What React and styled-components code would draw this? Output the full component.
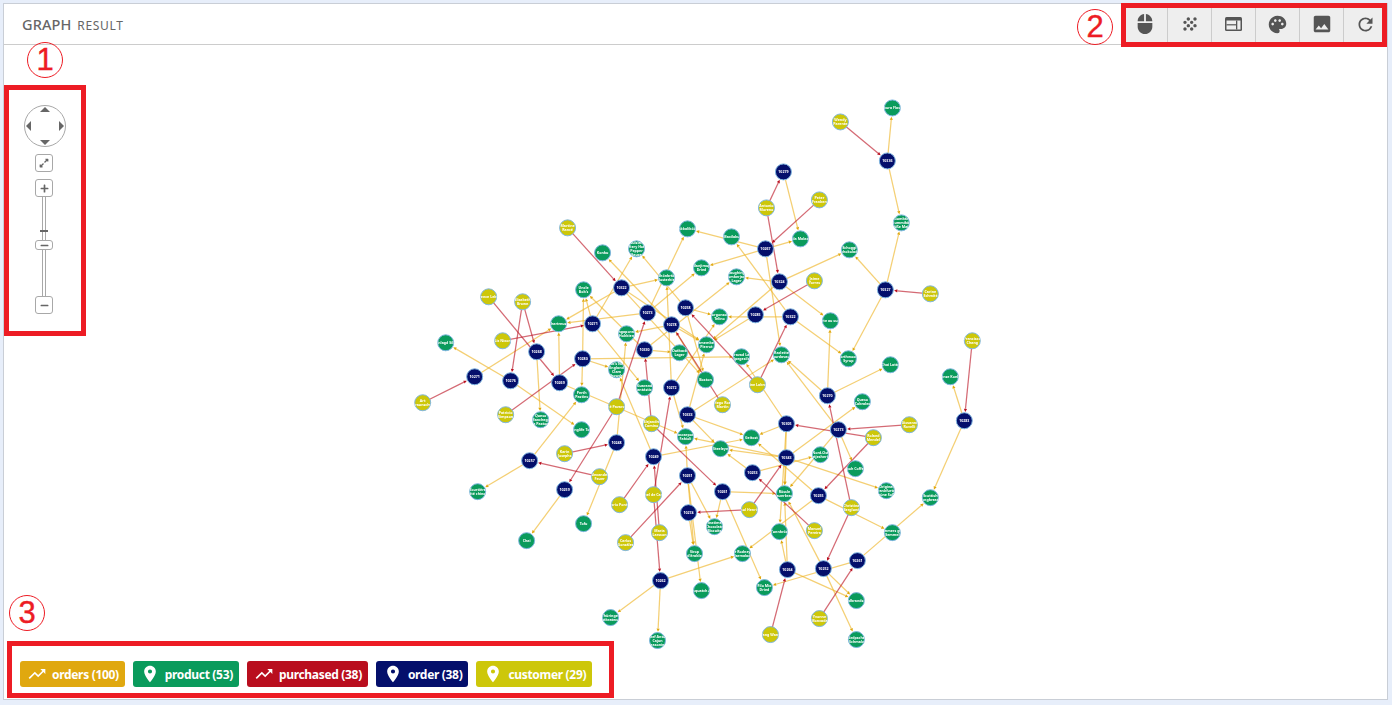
import React from "react";
import styled, { createGlobalStyle } from "styled-components";
import { MdMouse, MdGrain, MdPalette, MdImage, MdRefresh, MdTrendingUp, MdPlace } from "react-icons/md";
import { FaExpandAlt, FaPlus, FaMinus } from "react-icons/fa";

const Global = createGlobalStyle`
  html, body { margin: 0; padding: 0; background: #e7eefa; }
  body { font-family: "Noto Sans", "Liberation Sans", sans-serif; }
`;

const COLORS = {
  orders: "#e0a80f",
  product: "#0a9b5c",
  purchased: "#b90e1e",
  order: "#040f6b",
  customer: "#cdc70a",
};

const customers = [
  ["c1",568,228,"Martine\nRancé"],["c2",489,297,"Laurence Lebihan"],["c3",523,302,"Elizabeth\nBrown"],["c4",503,341,"Liz Nixon"],
  ["c5",423,403,"Art\nBraunschw"],["c6",506,415,"Patricio\nSimpson"],["c7",565,454,"Karin\nJosephs"],["c8",600,477,"Alexander\nFeuer"],
  ["c9",617,407,"José Pavarotti"],["c10",652,424,"Alejandra\nCamino"],["c11",620,505,"Mario Pontes"],["c12",654,495,"Isabel de Castro"],
  ["c13",660,533,"Maria\nLarsson"],["c14",626,543,"Carlos\nGonzález"],["c15",758,385,"Janine Labrune"],["c16",723,405,"Diego Roel\nMartín"],
  ["c17",750,510,"Paul Henriot"],["c18",815,531,"Manuel\nPereira"],["c19",852,508,"Christina\nBerglund"],["c20",874,438,"Roland\nMendel"],
  ["c21",910,425,"Giovanni\nRovelli"],["c22",820,619,"Yvonne\nMoncada"],["c23",771,635,"Yang Wang"],["c24",841,122,"Wendy\nParente"],
  ["c25",767,208,"Antonio\nMoreno"],["c26",820,200,"Peter\nFranken"],["c27",815,281,"Jaime\nYorres"],["c28",931,294,"Carine\nSchmitt"],
  ["c29",973,341,"Francisco\nChang"],
];

const products = [
  ["p1",893,108,"Ikura Flash"],["p2",902,223,"Gumbär\nGummibär\nSüße Maid"],["p3",850,250,"Schoggi\nSchokolade"],["p4",801,239,"Gula Malacca"],
  ["p5",732,237,"Maxilaku"],["p6",737,277,"Laughing\nLumberjack\nLager"],["p7",702,268,"Manjimup\nDried"],["p8",688,229,"Lakkalikööri"],
  ["p9",603,253,"Konbu"],["p10",637,249,"Louisiana\nFiery Hot\nPepper\nSauce"],["p11",667,278,"Rhönbräu\nKlosterbier"],["p12",584,290,"Uncle\nBob's"],
  ["p13",559,324,"Chartreuse"],["p14",446,343,"Inlagd Sill"],["p15",627,334,"Singaporean\nHokkien"],["p16",720,317,"Gorgonzola\nTelino"],
  ["p17",707,345,"Camembert\nPierrot"],["p18",680,353,"Outback\nLager"],["p19",742,357,"Gravad Lax\nSpegesild"],["p20",782,355,"Raclette\nCourdavault"],
  ["p21",831,321,"Tarte au sucre"],["p22",849,359,"Northwoods\nSyrup"],["p23",891,365,"Chai Latte"],["p24",951,377,"Zaanse Koeken"],
  ["p25",617,370,"Jack's New\nEngland\nClam\nChowder"],["p26",582,395,"Perth\nPasties"],["p27",541,420,"Queso\nManchego\nLa Pastora"],["p28",582,430,"Longlife Tofu"],
  ["p29",645,388,"Guaraná\nFantástica"],["p30",706,380,"Boston"],["p31",863,402,"Queso\nCabrales"],["p32",686,437,"Mascarpone\nFabioli"],
  ["p33",721,449,"Steeleye"],["p34",752,438,"Geitost"],["p35",821,455,"Nord-Ost\nMatjeshering"],["p36",856,469,"Ipoh Coffee"],
  ["p37",887,491,"Original\nFrankfurter\nGrüne Soße"],["p38",931,498,"Scottish\nLongbreads"],["p39",785,494,"Rössle\nSauerkraut"],["p40",715,527,"Teatime\nChocolate\nBiscuits"],
  ["p41",780,532,"Tunnbröd"],["p42",893,533,"Wimmers gute\nSemmel"],["p43",743,554,"Sir Rodney's\nMarmalade"],["p44",765,588,"Filo Mix\nDried"],
  ["p45",857,601,"Gudbrandsdal"],["p46",857,640,"Nördpsched\nSchmalz"],["p47",702,591,"Sasquatch Ale"],["p48",695,554,"Sirop\nd'érable"],
  ["p49",611,618,"Thüringer\nRostbratwurst"],["p50",658,641,"Chef Anton\nCajun\nSeasoning"],["p51",584,524,"Tofu"],["p52",527,541,"Chai"],
  ["p53",478,492,"Tourtière\nPâté chinois"],
];

const ordersList = [
  ["o1",888,161,"10336"],["o2",784,172,"10279"],["o3",766,249,"10267"],["o4",780,282,"10324"],["o5",886,290,"10327"],["o6",756,315,"10285"],
  ["o7",791,317,"10322"],["o8",622,288,"10322"],["o9",648,313,"10273"],["o10",686,308,"10258"],["o11",672,325,"10278"],["o12",593,324,"10271"],
  ["o13",645,350,"10330"],["o14",537,352,"10268"],["o15",583,359,"10280"],["o16",475,377,"10271"],["o17",511,381,"10276"],["o18",560,383,"10269"],
  ["o19",672,388,"10272"],["o20",828,396,"10270"],["o21",688,415,"10333"],["o22",787,424,"10305"],["o23",839,430,"10273"],["o24",965,421,"10283"],
  ["o25",617,443,"10248"],["o26",654,457,"10249"],["o27",530,461,"10257"],["o28",787,458,"10343"],["o29",753,473,"10253"],["o30",688,476,"10251"],
  ["o31",565,490,"10259"],["o32",819,496,"10255"],["o33",723,492,"10261"],["o34",689,513,"10274"],["o35",858,561,"10261"],["o36",824,569,"10252"],
  ["o37",788,570,"10264"],["o38",661,581,"10262"],
];

const nodes = [
  ...customers.map((n) => ({ kind: "customer", n })),
  ...products.map((n) => ({ kind: "product", n })),
  ...ordersList.map((n) => ({ kind: "order", n })),
].map(({ kind, n }) => ({ id: n[0], x: n[1], y: n[2], label: n[3], kind }));
const byId = Object.fromEntries(nodes.map((n) => [n.id, n]));

const purchased = "c24>o1 c25>o2 c25>o4 c26>o3 c27>o6 c28>o5 c29>o24 c1>o8 c2>o18 c3>o14 c3>o17 c4>o12 c5>o16 c6>o15 c7>o25 c8>o27 c9>o9 c9>o31 c10>o13 c10>o33 c11>o26 c13>o26 c12>o19 c12>o38 c14>o30 c15>o7 c15>o10 c16>o11 c17>o28 c17>o34 c18>o29 c19>o20 c19>o36 c20>o32 c20>o22 c21>o23 c22>o35 c23>o37".split(" ");
const ordered = "o1>p1 o1>p2 o5>p2 o5>p3 o5>p22 o2>p4 o3>p4 o3>p8 o3>p7 o3>p20 o4>p3 o4>p6 o4>p17 o4>p21 o6>p17 o7>p16 o10>p16 o7>p22 o7>p5 o19>p16 o21>p17 o8>p11 o8>p13 o8>p17 o12>p10 o11>p9 o10>p10 o9>p8 o19>p11 o9>p7 o15>p12 o12>p12 o13>p12 o18>p13 o9>p13 o16>p13 o17>p14 o11>p15 o25>p15 o15>p25 o15>p19 o13>p18 o15>p26 o14>p27 o17>p28 o18>p32 o27>p26 o27>p53 o31>p52 o25>p51 o26>p34 o26>p25 o12>p29 o19>p32 o21>p34 o21>p33 o21>p20 o28>p32 o22>p34 o28>p33 o32>p34 o29>p33 o29>p35 o28>p39 o28>p31 o28>p37 o32>p42 o22>p39 o22>p41 o23>p39 o23>p36 o20>p20 o23>p20 o22>p19 o20>p21 o20>p23 o11>p17 o8>p30 o11>p30 o10>p30 o13>p6 o33>p39 o33>p40 o33>p44 o30>p40 o30>p48 o34>p48 o30>p47 o30>p32 o38>p49 o38>p50 o38>p43 o32>p43 o37>p41 o37>p45 o37>p39 o35>p44 o36>p45 o36>p46 o36>p39 o35>p38 o24>p24 o24>p38".split(" ");

const Page = styled.div`
  position: relative;
  box-sizing: border-box;
  width: 1392px;
  height: 705px;
  padding: 3px 4px 5px 3px;
  background: #e7eefa;
  overflow: hidden;
`;
const Panel = styled.div`
  box-sizing: border-box;
  height: 100%;
  display: flex;
  flex-direction: column;
  background: #fff;
  border: 1px solid #c9ced6;
`;
const Header = styled.header`
  flex: none;
  height: 41px;
  box-sizing: border-box;
  display: flex;
  align-items: center;
  justify-content: space-between;
  padding-left: 18px;
  border-bottom: 1px solid #cccccc;
`;
const Title = styled.h1`
  margin: 0;
  font-size: 14.5px;
  font-weight: 500;
  color: #666;
  letter-spacing: 0.1px;
  small { font-size: 12px; font-weight: 400; margin-left: 2px; letter-spacing: 0.7px; }
`;
const Toolbar = styled.div`
  display: flex;
  align-self: stretch;
  background: #eeeeee;
`;
const ToolButton = styled.button`
  width: 44px;
  padding: 0;
  border: 0;
  border-left: ${(p) => (p.$first ? "0" : "1px solid #cccccc")};
  background: transparent;
  color: #555;
  display: flex;
  align-items: center;
  justify-content: center;
`;
const Canvas = styled.div`
  position: relative;
  flex: 1;
  min-height: 0;
`;
const GraphSvg = styled.svg`
  display: block;
  width: 100%;
  height: 100%;
  filter: blur(0.35px);
`;
const Edge = styled.line`
  stroke: ${(p) => (p.$type === "orders" ? "#eeb52a" : COLORS.purchased)};
  stroke-width: 1.25;
  stroke-opacity: ${(p) => (p.$type === "orders" ? 0.65 : 0.62)};
`;
const Arrow = styled.polygon`
  fill: ${(p) => COLORS[p.$type]};
`;
const NodeDot = styled.circle`
  fill: ${(p) => COLORS[p.$kind]};
  stroke: #7fb6e0;
  stroke-width: 1;
`;
const NodeLabel = styled.text`
  fill: #fff;
  font-family: "Noto Sans", "Liberation Sans", sans-serif;
  font-size: 3.6px;
  font-weight: 700;
  text-anchor: middle;
`;

const PanZoom = styled.div`
  position: absolute;
  left: 20px;
  top: 60px;
  width: 42px;
  display: flex;
  flex-direction: column;
  align-items: center;
`;
const PanCircle = styled.div`
  box-sizing: border-box;
  width: 42px;
  height: 42px;
  border: 1px solid #a8a8a8;
  border-radius: 50%;
  margin-bottom: 7px;
  svg { display: block; width: 40px; height: 40px; fill: #666; }
`;
const ZoomButton = styled.div`
  box-sizing: border-box;
  width: 18px;
  height: ${(p) => p.$h || 18}px;
  margin-left: -2px;
  border: 1px solid #a8a8a8;
  border-radius: 3px;
  background: #fff;
  color: #666;
  display: flex;
  align-items: center;
  justify-content: center;
  margin-bottom: ${(p) => p.$mb || 0}px;
`;
const SliderTrack = styled.div`
  position: relative;
  box-sizing: border-box;
  width: 4px;
  height: 99px;
  margin-left: -2px;
  border-left: 1px solid #a8a8a8;
  border-right: 1px solid #a8a8a8;
`;
const SliderTick = styled.div`
  position: absolute;
  left: -3px;
  top: 33px;
  width: 8px;
  height: 2px;
  background: #666;
`;
const SliderHandle = styled(ZoomButton)`
  position: absolute;
  left: -8px;
  top: 43px;
  margin: 0;
`;

const Legend = styled.div`
  position: absolute;
  left: 16px;
  bottom: 12px;
  display: flex;
  gap: 8px;
`;
const Chip = styled.div`
  height: 26px;
  box-sizing: border-box;
  display: flex;
  align-items: center;
  gap: 5px;
  padding: 0 6px 0 7px;
  border-radius: 3px;
  background: ${(p) => COLORS[p.$type]};
  color: #fff;
  font-size: 12px;
  font-weight: 700;
  letter-spacing: -0.32px;
  white-space: nowrap;
`;

const RedBox = styled.div`
  position: absolute;
  box-sizing: border-box;
  left: ${(p) => p.$l}px;
  top: ${(p) => p.$t}px;
  width: ${(p) => p.$w}px;
  height: ${(p) => p.$h}px;
  border: 5px solid #ed1c24;
  pointer-events: none;
`;
const Callout = styled.div`
  position: absolute;
  box-sizing: border-box;
  left: ${(p) => p.$l}px;
  top: ${(p) => p.$t}px;
  width: 36px;
  height: 36px;
  border: 1.5px solid #ed1c24;
  border-radius: 50%;
  color: #ed1c24;
  font-family: "Liberation Sans", sans-serif;
  font-size: 31px;
  line-height: 33px;
  text-align: center;
  -webkit-text-stroke: 0.4px #ed1c24;
`;

function LayoutIcon() {
  return (
    <svg width="17" height="14" viewBox="0 0 17 14">
      <rect x="0" y="0" width="17" height="14" rx="1.5" fill="#555" />
      <rect x="1.5" y="3.5" width="14" height="9" fill="#eee" />
      <rect x="1.5" y="7.2" width="9.5" height="1.2" fill="#555" />
      <rect x="11" y="3.5" width="1.3" height="9" fill="#555" />
    </svg>
  );
}

function GraphEdge({ spec, type }) {
  const [a, b] = spec.split(">").map((k) => byId[k]);
  const dx = b.x - a.x;
  const dy = b.y - a.y;
  const len = Math.hypot(dx, dy) || 1;
  const ux = dx / len;
  const uy = dy / len;
  const tipX = b.x - ux * 8.8;
  const tipY = b.y - uy * 8.8;
  const baseX = tipX - ux * 3.2;
  const baseY = tipY - uy * 3.2;
  const px = -uy * 1.6;
  const py = ux * 1.6;
  return (
    <>
      <Edge $type={type} x1={a.x} y1={a.y} x2={baseX} y2={baseY} />
      <Arrow
        $type={type}
        points={`${tipX},${tipY} ${baseX + px},${baseY + py} ${baseX - px},${baseY - py}`}
      />
    </>
  );
}

function GraphNode({ node }) {
  const lines = node.label.split("\n");
  const start = node.y + 1.3 - ((lines.length - 1) * 4) / 2;
  const clipId = `clip-${node.id}`;
  return (
    <g>
      <clipPath id={clipId}>
        <circle cx={node.x} cy={node.y} r={8} />
      </clipPath>
      <NodeDot $kind={node.kind} cx={node.x} cy={node.y} r={8} />
      <NodeLabel x={node.x} y={start} clipPath={`url(#${clipId})`}>
        {lines.map((l, i) => (
          <tspan key={i} x={node.x} y={start + i * 4}>{l}</tspan>
        ))}
      </NodeLabel>
    </g>
  );
}

const legend = [
  { type: "orders", label: "orders (100)", Icon: MdTrendingUp },
  { type: "product", label: "product (53)", Icon: MdPlace },
  { type: "purchased", label: "purchased (38)", Icon: MdTrendingUp },
  { type: "order", label: "order (38)", Icon: MdPlace },
  { type: "customer", label: "customer (29)", Icon: MdPlace },
];

export default function App() {
  return (
    <Page>
      <Global />
      <Panel>
        <Header>
          <Title>GRAPH <small>RESULT</small></Title>
          <Toolbar>
            <ToolButton $first><MdMouse size={22} /></ToolButton>
            <ToolButton><MdGrain size={20} /></ToolButton>
            <ToolButton><LayoutIcon /></ToolButton>
            <ToolButton><MdPalette size={21} /></ToolButton>
            <ToolButton><MdImage size={22} /></ToolButton>
            <ToolButton><MdRefresh size={21} /></ToolButton>
          </Toolbar>
        </Header>
        <Canvas>
          <GraphSvg viewBox="4 45 1384 654" preserveAspectRatio="xMinYMin meet">
            {ordered.map((s) => <GraphEdge key={s} spec={s} type="orders" />)}
            {purchased.map((s) => <GraphEdge key={s} spec={s} type="purchased" />)}
            {nodes.map((n) => <GraphNode key={n.id} node={n} />)}
          </GraphSvg>
          <PanZoom>
            <PanCircle>
              <svg viewBox="0 0 40 40">
                <polygon points="20,1 15,6 25,6" />
                <polygon points="20,39 15,34 25,34" />
                <polygon points="1,20 6,15 6,25" />
                <polygon points="39,20 34,15 34,25" />
              </svg>
            </PanCircle>
            <ZoomButton $mb={7}><FaExpandAlt size={10} /></ZoomButton>
            <ZoomButton><FaPlus size={9} /></ZoomButton>
            <SliderTrack>
              <SliderTick />
              <SliderHandle $h={10}><FaMinus size={9} /></SliderHandle>
            </SliderTrack>
            <ZoomButton><FaMinus size={9} /></ZoomButton>
          </PanZoom>
          <Legend>
            {legend.map(({ type, label, Icon }) => (
              <Chip key={type} $type={type}>
                <Icon size={20} />
                {label}
              </Chip>
            ))}
          </Legend>
        </Canvas>
      </Panel>
      <RedBox $l={4} $t={85} $w={82} $h={251} />
      <RedBox $l={1121} $t={3} $w={266} $h={44} />
      <RedBox $l={7} $t={641} $w={607} $h={57} />
      <Callout $l={27} $t={42}>1</Callout>
      <Callout $l={1077} $t={9}>2</Callout>
      <Callout $l={9} $t={595}>3</Callout>
    </Page>
  );
}
